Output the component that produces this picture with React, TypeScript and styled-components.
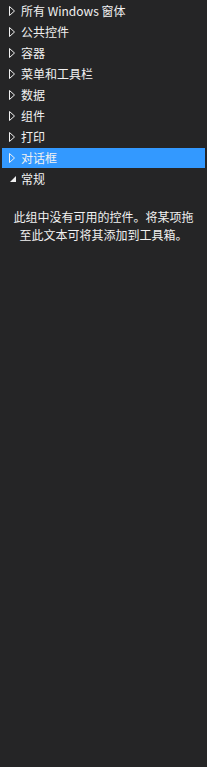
import React from 'react';
import styled, { createGlobalStyle } from 'styled-components';

const GlobalStyle = createGlobalStyle`
  html, body {
    margin: 0;
    padding: 0;
    background: #252526;
  }
`;

const Panel = styled.div`
  width: 207px;
  height: 767px;
  background: #252526;
  color: #f1f1f1;
  font-family: "Microsoft YaHei", "Noto Sans CJK SC", "Noto Sans", sans-serif;
  font-size: 12px;
  padding-top: 1px;
  box-sizing: border-box;
  overflow: hidden;
`;

const List = styled.ul`
  list-style: none;
  margin: 0;
  padding: 0;
  display: flex;
  flex-direction: column;
  gap: 1px;
`;

const Row = styled.li<{ $selected?: boolean }>`
  display: flex;
  align-items: center;
  height: 20px;
  margin: 0 2px;
  padding-left: 7px;
  background: ${p => (p.$selected ? '#3399ff' : 'transparent')};
  color: #f1f1f1;
  white-space: nowrap;
`;

const Arrow = styled.span`
  width: 8px;
  height: 20px;
  display: flex;
  align-items: center;
  margin-right: 4px;
`;

const Label = styled.span`
  line-height: 20px;
`;

const Empty = styled.p`
  margin: 19px 8px 0;
  text-align: center;
  line-height: 18px;
  color: #f1f1f1;
`;

const Collapsed = () => (
  <svg width="7" height="10" viewBox="0 0 7 10">
    <path d="M0.5 0.5 L5.5 5 L0.5 9.5 Z" fill="none" stroke="#f1f1f1" strokeWidth="1" />
  </svg>
);

const Expanded = () => (
  <svg width="7" height="10" viewBox="0 0 7 10">
    <path d="M1 8 L7 8 L7 2 Z" fill="#f1f1f1" />
  </svg>
);

const groups = ['所有 Windows 窗体', '公共控件', '容器', '菜单和工具栏', '数据', '组件', '打印', '对话框', '常规'];

export default function App() {
  return (
    <>
      <GlobalStyle />
      <Panel>
        <List>
          {groups.map((g, i) => (
            <Row key={g} $selected={g === '对话框'}>
              <Arrow>{i === groups.length - 1 ? <Expanded /> : <Collapsed />}</Arrow>
              <Label>{g}</Label>
            </Row>
          ))}
        </List>
        <Empty>此组中没有可用的控件。将某项拖至此文本可将其添加到工具箱。</Empty>
      </Panel>
    </>
  );
}
